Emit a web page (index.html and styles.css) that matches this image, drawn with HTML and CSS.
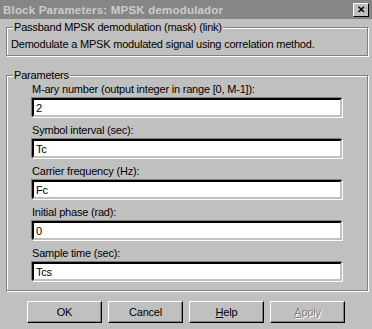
FILE: index.html
```html
<!DOCTYPE html>
<html>
<head>
  <title>Block Parameters: MPSK demodulador</title>
  <link rel="stylesheet" href="styles.css">
</head>
<body>
  <div class="window">
    <div class="titlebar">
      <span class="title">Block Parameters: MPSK demodulador</span>
      <span class="close">&#x2715;</span>
    </div>

    <fieldset class="group desc">
      <legend>Passband MPSK demodulation (mask) (link)</legend>
      <div class="desc-text">Demodulate a MPSK modulated signal using correlation method.</div>
    </fieldset>

    <fieldset class="group params">
      <legend>Parameters</legend>
      <div class="fields">
        <div class="field">
          <label>M-ary number (output integer in range [0, M-1]):</label>
          <div class="input">2</div>
        </div>
        <div class="field">
          <label>Symbol interval (sec):</label>
          <div class="input">Tc</div>
        </div>
        <div class="field">
          <label>Carrier frequency (Hz):</label>
          <div class="input">Fc</div>
        </div>
        <div class="field">
          <label>Initial phase (rad):</label>
          <div class="input">0</div>
        </div>
        <div class="field">
          <label>Sample time (sec):</label>
          <div class="input">Tcs</div>
        </div>
      </div>
    </fieldset>

    <div class="buttons">
      <button class="btn">OK</button>
      <button class="btn">Cancel</button>
      <button class="btn"><u>H</u>elp</button>
      <button class="btn disabled"><u>A</u>pply</button>
    </div>
  </div>
</body>
</html>
```

FILE: styles.css
```css
body { margin: 0; padding: 0; background: #c0c0c0; font-family: "Liberation Sans", Arial, sans-serif; font-size: 11px; letter-spacing: -0.2px; color: #000; }
.window { width: 372px; height: 329px; background: #c0c0c0; box-sizing: border-box; display: flex; flex-direction: column; }

.titlebar { height: 19px; background: #868686; display: flex; align-items: center; justify-content: space-between; padding: 0 3px 0 3px; box-sizing: border-box; }
.title { color: #cccccc; font-weight: bold; font-size: 11.5px; letter-spacing: 0.2px; }
.close { width: 14px; height: 12px; background: #c0c0c0; border: 1px solid; border-color: #fff #000 #000 #fff; font-size: 10px; line-height: 12px; text-align: center; color: #000; font-weight: bold; }

.group { border: 1px solid #808080; box-shadow: inset 1px 1px #fff, 1px 1px #fff; margin: 0 4px 0 6px; padding: 0; }
.group legend { padding: 0 1px; margin-left: 6px; background: #c0c0c0; line-height: 14px; }

.desc { margin-top: 1px; height: 36px; box-sizing: border-box; }
.desc-text { padding: 4px 0 0 4px; }

.params { margin-top: 12px; }
.fields { padding: 0 0 9px 25px; }
.field { margin-bottom: 6px; }
.field:last-child { margin-bottom: 0; }
.field label { display: block; line-height: 14px; margin-bottom: 2px; }
.input { width: 310px; height: 19px; box-sizing: border-box; background: #fff; border: 2px solid; border-color: #000 #c0c0c0 #c0c0c0 #000; box-shadow: -1px -1px #808080, 1px 1px #fff; padding: 1px 0 0 2px; line-height: 14px; }

.buttons { display: flex; gap: 6px; padding: 10px 0 0 27px; }
.btn { width: 75px; height: 22px; background: #c0c0c0; border: 1px solid; border-color: #fff #000 #000 #fff; box-shadow: inset -1px -1px #808080; font-family: inherit; font-size: 11px; letter-spacing: -0.2px; padding: 0; color: #000; }
.btn.disabled { color: #808080; text-shadow: 1px 1px #fff; }
```
